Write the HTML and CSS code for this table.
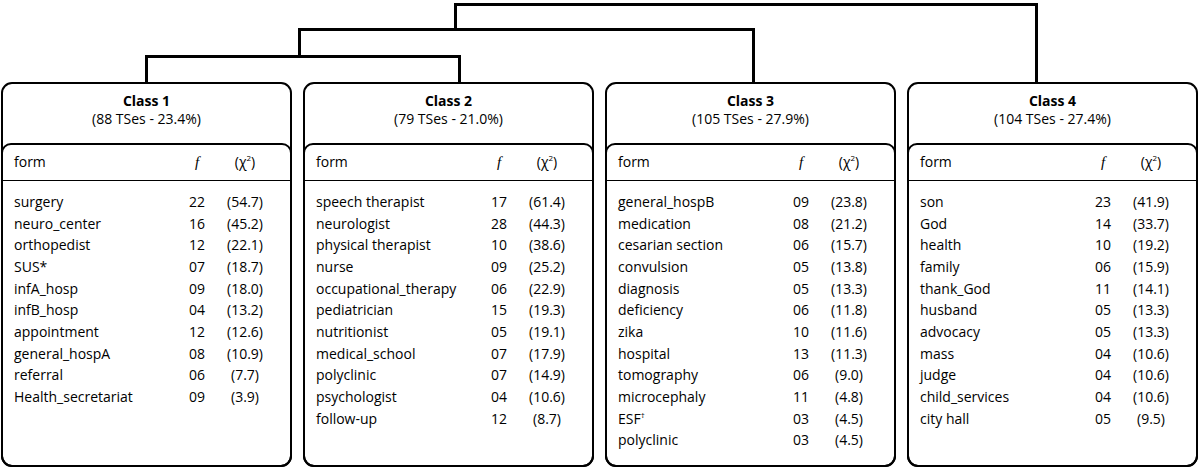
FILE: index.html
```html
<!DOCTYPE html>
<html lang="en">
<head>
<meta charset="utf-8">
<title>Classes</title>
<link rel="stylesheet" href="styles.css">
</head>
<body>
<svg class="tree" width="1200" height="82" viewBox="0 0 1200 82" aria-hidden="true">
  <path d="M455.5 30 V4.5 H1036.5 V82" />
  <path d="M299.5 57 V29.5 H753.5 V82" />
  <path d="M146.5 82 V56.5 H459.5 V82" />
</svg>
<main class="cards">
  <section class="card">
    <header class="card-head">
      <div class="card-title">Class 1</div>
      <div class="card-sub">(88 TSes - 23.4%)</div>
    </header>
    <div class="card-body">
      <div class="row th"><span>form</span><span class="c f">f</span><span class="c">(χ<sup>2</sup>)</span></div>
      <div class="rows">
        <div class="row"><span>surgery</span><span class="c">22</span><span class="c">(54.7)</span></div>
        <div class="row"><span>neuro_center</span><span class="c">16</span><span class="c">(45.2)</span></div>
        <div class="row"><span>orthopedist</span><span class="c">12</span><span class="c">(22.1)</span></div>
        <div class="row"><span>SUS*</span><span class="c">07</span><span class="c">(18.7)</span></div>
        <div class="row"><span>infA_hosp</span><span class="c">09</span><span class="c">(18.0)</span></div>
        <div class="row"><span>infB_hosp</span><span class="c">04</span><span class="c">(13.2)</span></div>
        <div class="row"><span>appointment</span><span class="c">12</span><span class="c">(12.6)</span></div>
        <div class="row"><span>general_hospA</span><span class="c">08</span><span class="c">(10.9)</span></div>
        <div class="row"><span>referral</span><span class="c">06</span><span class="c">(7.7)</span></div>
        <div class="row"><span>Health_secretariat</span><span class="c">09</span><span class="c">(3.9)</span></div>
      </div>
    </div>
  </section>
  <section class="card">
    <header class="card-head">
      <div class="card-title">Class 2</div>
      <div class="card-sub">(79 TSes - 21.0%)</div>
    </header>
    <div class="card-body">
      <div class="row th"><span>form</span><span class="c f">f</span><span class="c">(χ<sup>2</sup>)</span></div>
      <div class="rows">
        <div class="row"><span>speech therapist</span><span class="c">17</span><span class="c">(61.4)</span></div>
        <div class="row"><span>neurologist</span><span class="c">28</span><span class="c">(44.3)</span></div>
        <div class="row"><span>physical therapist</span><span class="c">10</span><span class="c">(38.6)</span></div>
        <div class="row"><span>nurse</span><span class="c">09</span><span class="c">(25.2)</span></div>
        <div class="row"><span>occupational_therapy</span><span class="c">06</span><span class="c">(22.9)</span></div>
        <div class="row"><span>pediatrician</span><span class="c">15</span><span class="c">(19.3)</span></div>
        <div class="row"><span>nutritionist</span><span class="c">05</span><span class="c">(19.1)</span></div>
        <div class="row"><span>medical_school</span><span class="c">07</span><span class="c">(17.9)</span></div>
        <div class="row"><span>polyclinic</span><span class="c">07</span><span class="c">(14.9)</span></div>
        <div class="row"><span>psychologist</span><span class="c">04</span><span class="c">(10.6)</span></div>
        <div class="row"><span>follow-up</span><span class="c">12</span><span class="c">(8.7)</span></div>
      </div>
    </div>
  </section>
  <section class="card">
    <header class="card-head">
      <div class="card-title">Class 3</div>
      <div class="card-sub">(105 TSes - 27.9%)</div>
    </header>
    <div class="card-body">
      <div class="row th"><span>form</span><span class="c f">f</span><span class="c">(χ<sup>2</sup>)</span></div>
      <div class="rows">
        <div class="row"><span>general_hospB</span><span class="c">09</span><span class="c">(23.8)</span></div>
        <div class="row"><span>medication</span><span class="c">08</span><span class="c">(21.2)</span></div>
        <div class="row"><span>cesarian section</span><span class="c">06</span><span class="c">(15.7)</span></div>
        <div class="row"><span>convulsion</span><span class="c">05</span><span class="c">(13.8)</span></div>
        <div class="row"><span>diagnosis</span><span class="c">05</span><span class="c">(13.3)</span></div>
        <div class="row"><span>deficiency</span><span class="c">06</span><span class="c">(11.8)</span></div>
        <div class="row"><span>zika</span><span class="c">10</span><span class="c">(11.6)</span></div>
        <div class="row"><span>hospital</span><span class="c">13</span><span class="c">(11.3)</span></div>
        <div class="row"><span>tomography</span><span class="c">06</span><span class="c">(9.0)</span></div>
        <div class="row"><span>microcephaly</span><span class="c">11</span><span class="c">(4.8)</span></div>
        <div class="row"><span>ESF<sup>†</sup></span><span class="c">03</span><span class="c">(4.5)</span></div>
        <div class="row"><span>polyclinic</span><span class="c">03</span><span class="c">(4.5)</span></div>
      </div>
    </div>
  </section>
  <section class="card">
    <header class="card-head">
      <div class="card-title">Class 4</div>
      <div class="card-sub">(104 TSes - 27.4%)</div>
    </header>
    <div class="card-body">
      <div class="row th"><span>form</span><span class="c f">f</span><span class="c">(χ<sup>2</sup>)</span></div>
      <div class="rows">
        <div class="row"><span>son</span><span class="c">23</span><span class="c">(41.9)</span></div>
        <div class="row"><span>God</span><span class="c">14</span><span class="c">(33.7)</span></div>
        <div class="row"><span>health</span><span class="c">10</span><span class="c">(19.2)</span></div>
        <div class="row"><span>family</span><span class="c">06</span><span class="c">(15.9)</span></div>
        <div class="row"><span>thank_God</span><span class="c">11</span><span class="c">(14.1)</span></div>
        <div class="row"><span>husband</span><span class="c">05</span><span class="c">(13.3)</span></div>
        <div class="row"><span>advocacy</span><span class="c">05</span><span class="c">(13.3)</span></div>
        <div class="row"><span>mass</span><span class="c">04</span><span class="c">(10.6)</span></div>
        <div class="row"><span>judge</span><span class="c">04</span><span class="c">(10.6)</span></div>
        <div class="row"><span>child_services</span><span class="c">04</span><span class="c">(10.6)</span></div>
        <div class="row"><span>city hall</span><span class="c">05</span><span class="c">(9.5)</span></div>
      </div>
    </div>
  </section>
</main>
</body>
</html>
```

FILE: styles.css
```css
* { box-sizing: border-box; }
html, body {
  margin: 0;
  padding: 0;
  background: #fff;
}
body {
  width: 1200px;
  height: 472px;
  overflow: hidden;
  font-family: "Open Sans", "Noto Sans", sans-serif;
  font-size: 14px;
  color: #000;
}
.tree {
  display: block;
}
.tree path {
  fill: none;
  stroke: #000;
  stroke-width: 3;
  stroke-linejoin: miter;
}
.cards {
  display: grid;
  grid-template-columns: repeat(4, 1fr);
  column-gap: 11px;
  padding: 0 2px 0 1px;
  height: 385px;
}
.card {
  display: flex;
  flex-direction: column;
  border: 2px solid #000;
  border-radius: 11px;
}
.card-head {
  height: 59px;
  padding-top: 8px;
  text-align: center;
}
.card-title {
  font-weight: 700;
  line-height: 18px;
}
.card-sub {
  line-height: 17px;
}
.card-body {
  flex: 1;
  margin: 0 -2px -2px;
  border: 2px solid #000;
  border-radius: 10px 10px 11px 11px;
}
.row {
  display: grid;
  grid-template-columns: 1fr 40px 56px;
  padding: 0 17px 0 11px;
  line-height: 21.67px;
  white-space: nowrap;
}
.row .c {
  text-align: center;
}
.th {
  padding-top: 6px;
  padding-bottom: 7px;
  line-height: 22px;
  border-bottom: 1px solid #000;
}
.th .f {
  font-family: "Liberation Serif", "DejaVu Serif", serif;
  font-style: italic;
  font-size: 15px;
}
.rows {
  padding-top: 10px;
}
sup {
  font-size: 8px;
  line-height: 0;
  vertical-align: 0;
  position: relative;
  top: -6px;
}
```
